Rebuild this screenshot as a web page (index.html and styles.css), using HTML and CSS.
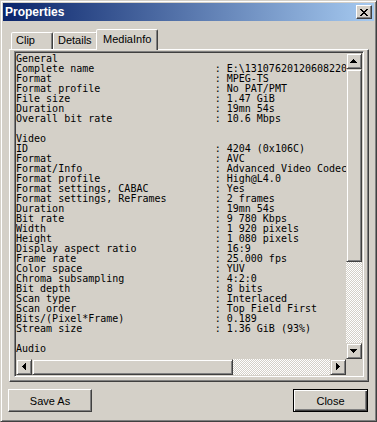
FILE: index.html
```html
<!DOCTYPE html>
<html>
<head>
<meta charset="utf-8">
<link rel="stylesheet" href="styles.css">
</head>
<body>
<div class="window">
  <div class="titlebar">
    <span class="title">Properties</span>
    <div class="caption-btn"><svg width="8" height="8" viewBox="0 0 8 8" shape-rendering="crispEdges"><path d="M0 0h2v1H0zM6 0h2v1H6zM1 1h2v1H1zM5 1h2v1H5zM2 2h4v1H2zM3 3h2v1H3zM2 4h4v1H2zM1 5h2v1H1zM5 5h2v1H5zM0 6h2v1H0zM6 6h2v1H6z" fill="#000"/></svg></div>
  </div>
  <div class="tabs">
    <div class="tab tab-clip">Clip</div>
    <div class="tab tab-details">Details</div>
    <div class="tab tab-active">MediaInfo</div>
  </div>
  <div class="panel">
    <div class="listbox">
      <div class="text">
        <div>General</div>
        <div><span class="k">Complete name</span>: E:\131076201206082200.ts</div>
        <div><span class="k">Format</span>: MPEG-TS</div>
        <div><span class="k">Format profile</span>: No PAT/PMT</div>
        <div><span class="k">File size</span>: 1.47 GiB</div>
        <div><span class="k">Duration</span>: 19mn 54s</div>
        <div><span class="k">Overall bit rate</span>: 10.6 Mbps</div>
        <div class="blank"></div>
        <div>Video</div>
        <div><span class="k">ID</span>: 4204 (0x106C)</div>
        <div><span class="k">Format</span>: AVC</div>
        <div><span class="k">Format/Info</span>: Advanced Video Codec</div>
        <div><span class="k">Format profile</span>: High@L4.0</div>
        <div><span class="k">Format settings, CABAC</span>: Yes</div>
        <div><span class="k">Format settings, ReFrames</span>: 2 frames</div>
        <div><span class="k">Duration</span>: 19mn 54s</div>
        <div><span class="k">Bit rate</span>: 9 780 Kbps</div>
        <div><span class="k">Width</span>: 1 920 pixels</div>
        <div><span class="k">Height</span>: 1 080 pixels</div>
        <div><span class="k">Display aspect ratio</span>: 16:9</div>
        <div><span class="k">Frame rate</span>: 25.000 fps</div>
        <div><span class="k">Color space</span>: YUV</div>
        <div><span class="k">Chroma subsampling</span>: 4:2:0</div>
        <div><span class="k">Bit depth</span>: 8 bits</div>
        <div><span class="k">Scan type</span>: Interlaced</div>
        <div><span class="k">Scan order</span>: Top Field First</div>
        <div><span class="k">Bits/(Pixel*Frame)</span>: 0.189</div>
        <div><span class="k">Stream size</span>: 1.36 GiB (93%)</div>
        <div class="blank"></div>
        <div>Audio</div>
      </div>
      <div class="vscroll">
        <div class="sb-btn"><svg width="8" height="4" viewBox="0 0 8 4" shape-rendering="crispEdges"><path d="M3 0h1v1h1v1h1v1h1v1H0V3h1V2h1V1h1z" fill="#000"/></svg></div>
        <div class="sb-thumb v-thumb"></div>
        <div class="track"></div>
        <div class="sb-btn"><svg width="8" height="4" viewBox="0 0 8 4" shape-rendering="crispEdges"><path d="M0 0h7v1H6v1H5v1H4v1H3V3H2V2H1V1H0z" fill="#000"/></svg></div>
      </div>
      <div class="hscroll">
        <div class="sb-btn"><svg width="4" height="8" viewBox="0 0 4 8" shape-rendering="crispEdges"><path d="M3 0h1v7H3V6H2V5H1V4H0V3h1V2h1V1h1z" fill="#000"/></svg></div>
        <div class="sb-thumb h-thumb"></div>
        <div class="track"></div>
        <div class="sb-btn"><svg width="4" height="8" viewBox="0 0 4 8" shape-rendering="crispEdges"><path d="M0 0h1v1h1v1h1v1h1v1H3v1H2v1H1v1H0z" fill="#000"/></svg></div>
      </div>
      <div class="corner"></div>
    </div>
  </div>
  <div class="buttons">
    <button class="btn btn-save">Save As</button>
    <button class="btn btn-default">Close</button>
  </div>
</div>
</body>
</html>
```
FILE: styles.css
```css
* { box-sizing: border-box; }
html, body { margin: 0; padding: 0; }
body {
  width: 377px;
  height: 422px;
  overflow: hidden;
  background: #d4d0c8;
  font-family: "Liberation Sans", Arial, sans-serif;
  font-size: 11px;
  color: #000;
}
.window {
  width: 377px;
  height: 422px;
  border: 1px solid;
  border-color: #d4d0c8 #404040 #404040 #d4d0c8;
  box-shadow: inset 1px 1px #fff, inset -1px -1px #808080;
  padding: 2px;
  display: flex;
  flex-direction: column;
  background: #d4d0c8;
}
.titlebar {
  height: 18px;
  flex: none;
  display: flex;
  align-items: center;
  justify-content: space-between;
  padding: 0 2px 0 2px;
  background: linear-gradient(to right, #0a246a, #a6caf0);
}
.title {
  color: #fff;
  font-weight: bold;
  font-size: 12px;
  line-height: 18px;
}
.caption-btn {
  width: 16px;
  height: 14px;
  border: 1px solid;
  border-color: #fff #404040 #404040 #fff;
  box-shadow: inset -1px -1px #808080;
  background: #d4d0c8;
  display: flex;
  align-items: center;
  justify-content: center;
}
.caption-btn svg { display: block; margin-top: 1px; }
.tabs {
  display: flex;
  align-items: flex-end;
  height: 20px;
  flex: none;
  margin: 8px 0 0 8px;
}
.tab {
  height: 17px;
  padding-left: 4px;
  border: 1px solid;
  border-bottom: 0;
  border-color: #fff #404040 transparent #fff;
  box-shadow: inset -1px 0 #808080;
  border-radius: 2px 2px 0 0;
  line-height: 14px;
  background: #d4d0c8;
  white-space: nowrap;
}
.tab-clip { width: 42px; }
.tab-details { width: 45px; }
.tab-active {
  width: 62px;
  height: 21px;
  margin-left: -2px;
  margin-bottom: -1px;
  padding-left: 6px;
  padding-top: 2px;
  position: relative;
  z-index: 2;
}
.panel {
  position: relative;
  z-index: 1;
  height: 333px;
  flex: none;
  margin: 0 5px 0 6px;
  border: 1px solid;
  border-color: #fff #404040 #404040 #fff;
  box-shadow: inset -1px -1px #808080;
  padding: 1px 4px 4px 4px;
}
.listbox {
  height: 326px;
  border: 1px solid;
  border-color: #808080 #fff #fff #808080;
  box-shadow: inset 1px 1px #404040, inset -1px -1px #d4d0c8;
  padding: 1px;
  display: grid;
  grid-template-columns: 1fr 16px;
  grid-template-rows: 1fr 16px;
  background: #d4d0c8;
}
.text {
  overflow: hidden;
  font-family: "DejaVu Sans Mono", "Liberation Mono", monospace;
  font-size: 10px;
  line-height: 10px;
  white-space: nowrap;
  padding-top: 1px;
  color: #000;
  min-width: 0;
}
.text .blank { height: 10px; }
.k { display: inline-block; width: 33ch; }
.vscroll { display: flex; flex-direction: column; }
.hscroll { display: flex; }
.sb-btn {
  width: 16px;
  height: 16px;
  flex: none;
  border: 1px solid;
  border-color: #d4d0c8 #404040 #404040 #d4d0c8;
  box-shadow: inset 1px 1px #fff, inset -1px -1px #808080;
  background: #d4d0c8;
  display: flex;
  align-items: center;
  justify-content: center;
}
.sb-btn svg { display: block; }
.sb-thumb {
  flex: none;
  border: 1px solid;
  border-color: #d4d0c8 #404040 #404040 #d4d0c8;
  box-shadow: inset 1px 1px #fff, inset -1px -1px #808080;
  background: #d4d0c8;
}
.v-thumb { height: 193px; }
.h-thumb { width: 201px; }
.track {
  flex: 1;
  background-color: #fff;
  background-image: conic-gradient(#d4d0c8 25%, #fff 0 50%, #d4d0c8 0 75%, #fff 0);
  background-size: 2px 2px;
}
.corner { background: #d4d0c8; }
.buttons {
  display: flex;
  justify-content: space-between;
  margin: 7px 6px 0 5px;
}
.btn {
  height: 23px;
  font-family: "Liberation Sans", Arial, sans-serif;
  font-size: 11px;
  color: #000;
  background: #d4d0c8;
  border: 1px solid;
  border-color: #fff #404040 #404040 #fff;
  box-shadow: inset -1px -1px #808080;
  padding: 0;
}
.btn-save { width: 84px; }
.btn-default {
  width: 75px;
  border-color: #000;
  box-shadow: inset 1px 1px #fff, inset -1px -1px #404040, inset -2px -2px #808080;
}
```
